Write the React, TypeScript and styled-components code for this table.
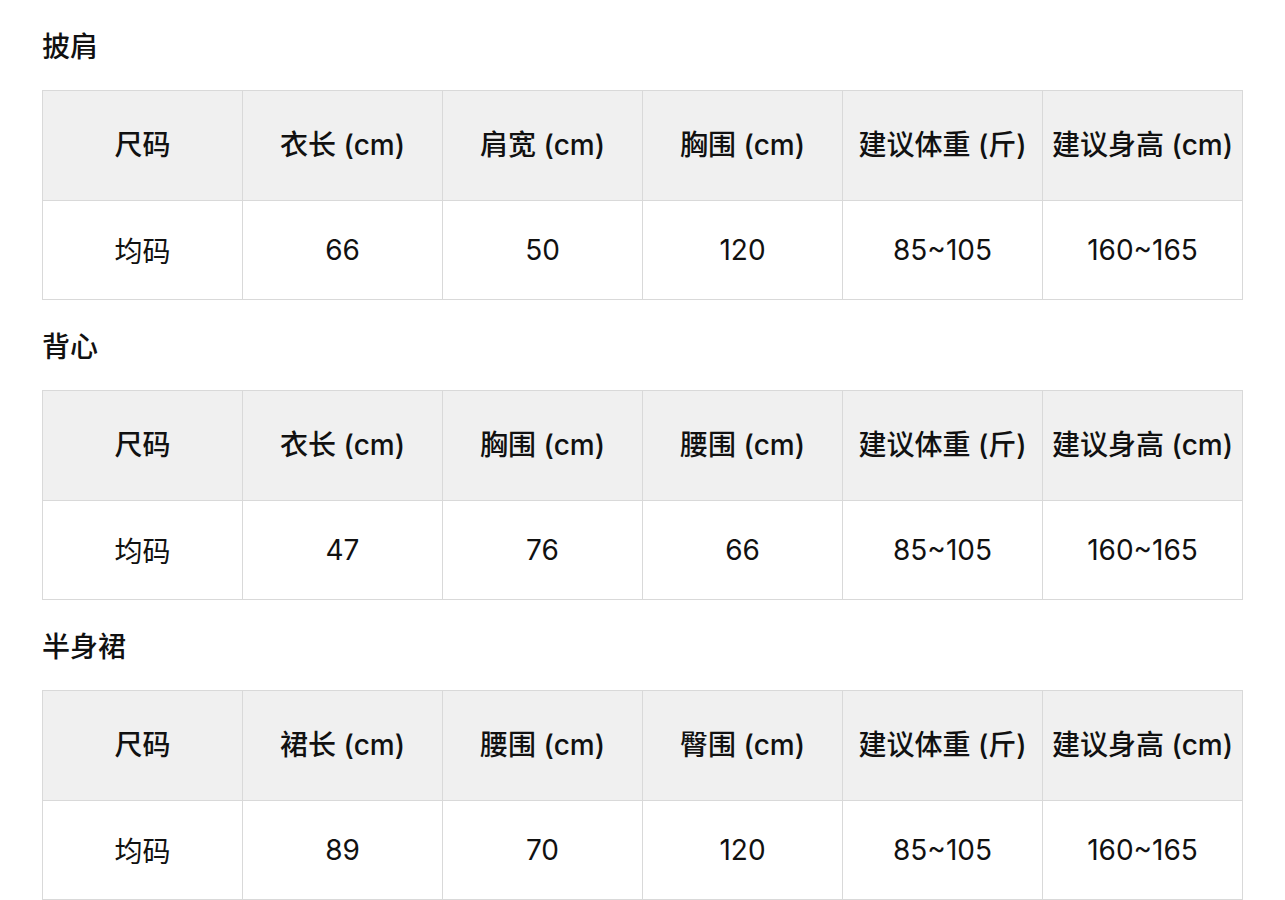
import React from "react";
import styled, { createGlobalStyle } from "styled-components";

const GlobalStyle = createGlobalStyle`
  html, body {
    margin: 0;
    padding: 0;
    background: #ffffff;
  }
  body {
    font-family: "Inter", "Noto Sans CJK SC", sans-serif;
    color: #111111;
  }
`;

const Page = styled.div`
  display: flex;
  flex-direction: column;
  padding: 0 42px;
`;

const Section = styled.section`
  display: flex;
  flex-direction: column;
`;

const Title = styled.h2`
  margin: 0;
  height: 90px;
  display: flex;
  align-items: center;
  font-size: 28px;
  font-weight: 500;
  color: #111111;
`;

const Table = styled.div`
  display: grid;
  grid-template-columns: repeat(6, 200px);
  width: 1201px;
  box-sizing: border-box;
  border-top: 1px solid #d9d9d9;
  border-left: 1px solid #d9d9d9;
`;

const Cell = styled.div<{ $head?: boolean }>`
  box-sizing: border-box;
  height: ${(p) => (p.$head ? "110px" : "99px")};
  padding-bottom: ${(p) => (p.$head ? "5px" : "0")};
  display: flex;
  align-items: center;
  justify-content: center;
  white-space: nowrap;
  border-right: 1px solid #d9d9d9;
  border-bottom: 1px solid #d9d9d9;
  background: ${(p) => (p.$head ? "#f0f0f0" : "#ffffff")};
  font-size: 28px;
  font-weight: ${(p) => (p.$head ? 500 : 400)};
  color: #111111;
`;

type Sheet = { title: string; head: string[]; row: string[] };

const sheets: Sheet[] = [
  {
    title: "披肩",
    head: ["尺码", "衣长 (cm)", "肩宽 (cm)", "胸围 (cm)", "建议体重 (斤)", "建议身高 (cm)"],
    row: ["均码", "66", "50", "120", "85~105", "160~165"],
  },
  {
    title: "背心",
    head: ["尺码", "衣长 (cm)", "胸围 (cm)", "腰围 (cm)", "建议体重 (斤)", "建议身高 (cm)"],
    row: ["均码", "47", "76", "66", "85~105", "160~165"],
  },
  {
    title: "半身裙",
    head: ["尺码", "裙长 (cm)", "腰围 (cm)", "臀围 (cm)", "建议体重 (斤)", "建议身高 (cm)"],
    row: ["均码", "89", "70", "120", "85~105", "160~165"],
  },
];

export default function App() {
  return (
    <>
      <GlobalStyle />
      <Page>
        {sheets.map((s) => (
          <Section key={s.title}>
            <Title>{s.title}</Title>
            <Table>
              {s.head.map((h, i) => (
                <Cell $head key={"h" + i}>
                  {h}
                </Cell>
              ))}
              {s.row.map((c, i) => (
                <Cell key={"r" + i}>{c}</Cell>
              ))}
            </Table>
          </Section>
        ))}
      </Page>
    </>
  );
}
